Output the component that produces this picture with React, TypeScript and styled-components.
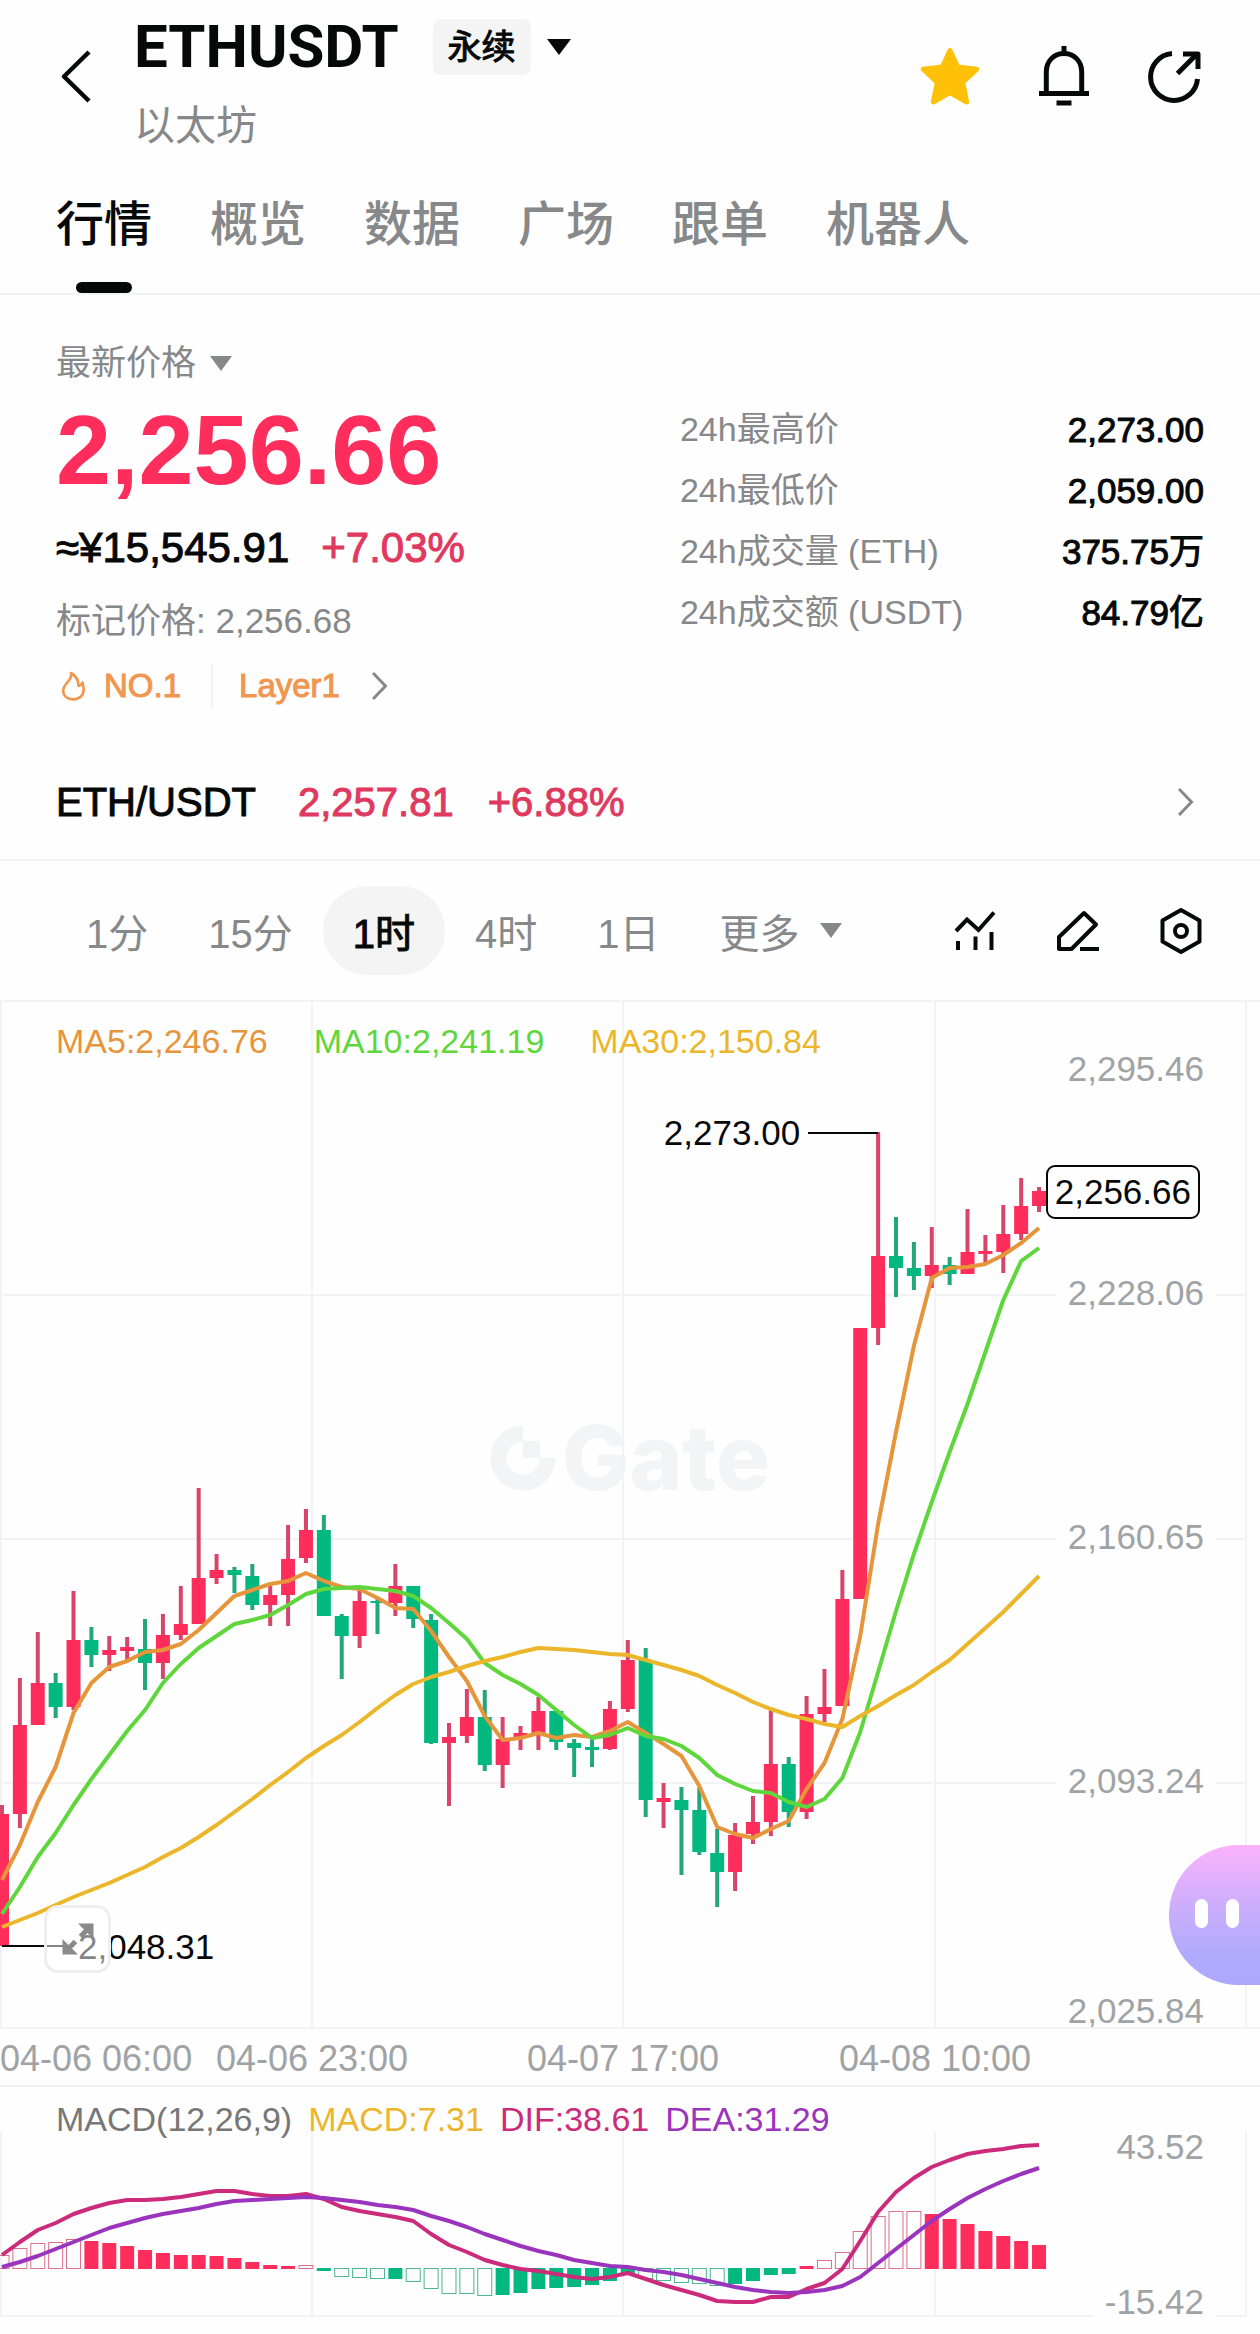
import React from "react";
import styled, { createGlobalStyle, css } from "styled-components";

const color = {
  ink: "#070808",
  muted: "#868889",
  axis: "#a0a3a5",
  line: "#f2f3f4",
  fill: "#f4f4f4",
  up: "#ff2d5b",
  upWick: "#d8456b",
  down: "#02b87f",
  downWick: "#22a67c",
  rise: "#e0395f",
  hot: "#f0964f",
  ma5: "#e6953a",
  ma10: "#5fd63c",
  ma30: "#ebb62a",
  dif: "#cc2a7a",
  dea: "#9b34bd",
};

const GlobalStyle = createGlobalStyle`
  * { box-sizing: border-box; }
  body {
    margin: 0;
    background: #fefefe;
    color: ${color.ink};
    font-family: "Liberation Sans", "Noto Sans CJK SC", sans-serif;
    overflow-x: hidden;
  }
  button { margin: 0; padding: 0; border: 0; background: none; color: inherit; font: inherit; cursor: pointer; }
  a { color: inherit; text-decoration: none; }
  svg { display: block; }
  dl, dd, h1, p { margin: 0; }
`;

const medium = css`
  -webkit-text-stroke: 1px currentColor;
`;

/* ---------- header ---------- */

const Page = styled.main`
  padding-bottom: 16px;
`;

const Header = styled.header`
  display: flex;
  align-items: center;
  padding: 0 58px 0 56px;
`;

const BackButton = styled.button`
  width: 78px;
  flex: none;
`;

const Titles = styled.div`
  flex: 1;
  padding: 19px 0 1px;
`;

const TitleRow = styled.div`
  display: flex;
  align-items: center;
  height: 56px;
`;

const Symbol = styled.h1`
  font: 700 60px/56px Roboto, sans-serif;
`;

const ContractButton = styled.button`
  display: flex;
  align-items: center;
  gap: 16px;
  margin-left: 34px;
  font-size: 34px;
  line-height: 56px;
`;

const Badge = styled.span`
  padding: 0 15px;
  border-radius: 8px;
  background: ${color.fill};
  ${medium}
`;

const Subtitle = styled.p`
  margin-top: 26px;
  color: ${color.muted};
  font-size: 41px;
  line-height: 50px;
`;

const Actions = styled.div`
  display: flex;
  align-items: center;
  gap: 59px;
`;

const Triangle = styled.span<{ $size: number }>`
  border: solid transparent;
  border-width: ${(p) => p.$size + 4}px ${(p) => p.$size}px 0;
  border-top-color: currentColor;
`;

/* ---------- tabs ---------- */

const Tabs = styled.nav`
  display: flex;
  gap: 58px;
  padding: 0 56px;
  border-bottom: 2px solid ${color.line};
`;

const Tab = styled.button<{ $active?: boolean }>`
  display: flex;
  flex-direction: column;
  align-items: center;
  gap: 27px;
  padding-top: 43px;
  color: ${(p) => (p.$active ? color.ink : color.muted)};
  font-size: 48px;
  font-weight: 500;
  line-height: 60px;
  white-space: nowrap;

  &::after {
    content: "";
    width: 56px;
    height: 11px;
    border-radius: 6px;
    background: ${(p) => (p.$active ? color.ink : "transparent")};
  }
`;

/* ---------- quote ---------- */

const Quote = styled.section`
  display: grid;
  grid-template-columns: 25fr 21fr;
  padding: 46px 56px 0;
`;

const PriceSource = styled.button`
  display: flex;
  align-items: center;
  gap: 14px;
  color: ${color.muted};
  font-size: 35px;
  line-height: 44px;
`;

const LastPrice = styled.p`
  margin-top: 15px;
  color: ${color.up};
  font-size: 99px;
  font-weight: 700;
  line-height: 100px;
`;

const FiatRow = styled.p`
  display: flex;
  gap: 32px;
  margin-top: 24px;
  font-size: 42px;
  line-height: 48px;
  ${medium}
`;

const Rise = styled.span`
  color: ${color.rise};
`;

const MarkPrice = styled.p`
  margin-top: 27px;
  color: ${color.muted};
  font-size: 35px;
  line-height: 44px;
`;

const Tags = styled.a`
  display: inline-flex;
  align-items: center;
  margin-top: 21px;
  color: ${color.hot};
  font-size: 33px;
  line-height: 44px;
`;

const Tag = styled.span`
  ${medium}
`;

const HotTag = styled(Tag)`
  display: flex;
  align-items: center;
  gap: 18px;
  padding: 0 30px 0 4px;
  border-right: 2px solid ${color.line};
`;

const SectorTag = styled(Tag)`
  padding: 0 32px 0 26px;
`;

const Stats = styled.dl`
  padding-top: 58px;
  line-height: 61px;
`;

const Stat = styled.div`
  display: flex;
  justify-content: space-between;
`;

const StatLabel = styled.dt`
  color: ${color.muted};
  font-size: 34px;
`;

const StatValue = styled.dd`
  font-size: 35px;
  ${medium}
`;

const SpotLink = styled.a`
  display: flex;
  align-items: center;
  gap: 34px;
  height: 116px;
  margin-top: 37px;
  padding: 0 66px 0 56px;
  border-bottom: 2px solid ${color.line};
  font-size: 40px;
  ${medium}
`;

const SpotPair = styled.span`
  margin-right: 8px;
`;

const Spacer = styled.span`
  flex: 1;
`;

/* ---------- toolbar ---------- */

const Toolbar = styled.div`
  display: flex;
  align-items: center;
  padding: 25px 58px 25px 56px;
  border-bottom: 2px solid ${color.line};
`;

const Interval = styled.button<{ $active?: boolean }>`
  display: flex;
  align-items: center;
  gap: 20px;
  height: 89px;
  padding: 0 30px;
  border-radius: 45px;
  background: ${(p) => (p.$active ? color.fill : "none")};
  color: ${(p) => (p.$active ? color.ink : color.muted)};
  font-size: 40px;
  ${(p) => p.$active && medium}
  white-space: nowrap;
`;

const Tools = styled.div`
  display: flex;
  align-items: center;
  gap: 60px;
  margin-left: auto;
`;

/* ---------- charts ---------- */

const Plot = styled.section<{ $height: number }>`
  position: relative;
  height: ${(p) => p.$height}px;
`;

const PlotSvg = styled.svg`
  position: absolute;
  inset: 0;
  width: 100%;
  height: 100%;
`;

const Legend = styled.div<{ $gap: number; $top: number }>`
  position: relative;
  display: flex;
  gap: ${(p) => p.$gap}px;
  padding: ${(p) => p.$top}px 56px 0;
  font-size: 34px;
  line-height: 40px;
  white-space: nowrap;
`;

const LegendItem = styled.span<{ $color: string }>`
  color: ${(p) => p.$color};
`;

const Label = styled.span`
  position: absolute;
  font-size: 35px;
  line-height: 40px;
  white-space: nowrap;
  transform: translateY(-50%);
`;

const AxisLabel = styled(Label)`
  right: 44px;
  padding: 0 12px;
  background: #fefefe;
  color: ${color.axis};
`;

const HighLabel = styled(Label)`
  right: 36.5%;
`;

const LowLabel = styled(Label)`
  left: 78px;
`;

const PriceTag = styled(Label)`
  right: 60px;
  padding: 3px 7px;
  border: 2px solid ${color.ink};
  border-radius: 9px;
  background: #fefefe;
  line-height: 44px;
`;

const Watermark = styled.div`
  position: absolute;
  top: 456px;
  left: 50%;
  display: flex;
  align-items: center;
  gap: 6px;
  color: #f3f4f5;
  font: 800 90px/90px Inter, sans-serif;
  transform: translate(-50%, -50%);
`;

const ExpandButton = styled.button`
  position: absolute;
  left: 44px;
  bottom: 54px;
  display: grid;
  place-items: center;
  width: 67px;
  height: 68px;
  border: 3px solid #eeeeee;
  border-radius: 14px;
  background: rgba(255, 255, 255, 0.5);
`;

const Assistant = styled.button`
  position: absolute;
  right: 0;
  bottom: 42px;
  display: flex;
  align-items: center;
  gap: 18px;
  width: 91px;
  height: 140px;
  padding: 0 0 4px 26px;
  border-radius: 70px 0 0 70px;
  background: linear-gradient(#fbb2fd, #cbaefc 45%, #b3abfd 75%, #aca6fd);
`;

const Eye = styled.span`
  width: 13px;
  height: 29px;
  border-radius: 7px;
  background: #fff;
`;

const TimeAxis = styled.div`
  position: relative;
  height: 60px;
  border: solid ${color.line};
  border-width: 2px 0;
  color: ${color.axis};
  font-size: 36px;
  line-height: 60px;
`;

const TimeLabel = styled.time<{ $start?: boolean }>`
  position: absolute;
  white-space: nowrap;
  transform: ${(p) => (p.$start ? "none" : "translateX(-50%)")};
`;

/* ---------- data ---------- */

const VIEW = 1260;
const STEP = 17.88;
const ORIGIN = 1003;
const PRICE_HEIGHT = 1025;
const MACD_ORIGIN = 2088;
const MACD_HEIGHT = 230;
const ZERO = 2269;
const GRID_X = [1, 312, 623, 935, 1246];

const xAt = (i: number) => 2 + i * STEP;

type Candle = [high: number, top: number, bottom: number, low: number, up: 0 | 1];

const candles: Candle[] = [
  [1806, 1815, 1947, 1947, 1], [1679, 1726, 1815, 1829, 1], [1633, 1684, 1726, 1726, 1], [1674, 1684, 1708, 1719, 0],
  [1592, 1641, 1708, 1711, 1], [1628, 1641, 1656, 1668, 0], [1637, 1651, 1656, 1672, 1], [1638, 1648, 1652, 1662, 1],
  [1620, 1650, 1664, 1691, 0], [1615, 1636, 1664, 1680, 1], [1587, 1625, 1636, 1641, 1], [1489, 1579, 1625, 1625, 1],
  [1555, 1571, 1579, 1585, 1], [1568, 1571, 1576, 1594, 0], [1565, 1577, 1606, 1611, 0], [1587, 1596, 1606, 1627, 1],
  [1526, 1560, 1596, 1627, 1], [1510, 1531, 1559, 1564, 1], [1516, 1531, 1617, 1617, 0], [1615, 1617, 1637, 1680, 0],
  [1589, 1602, 1637, 1649, 1], [1599, 1602, 1604, 1635, 0], [1565, 1587, 1604, 1617, 1], [1587, 1587, 1620, 1629, 0],
  [1615, 1621, 1744, 1745, 0], [1724, 1738, 1744, 1807, 1], [1690, 1718, 1737, 1744, 1], [1691, 1718, 1766, 1772, 0],
  [1718, 1740, 1766, 1789, 1], [1727, 1734, 1739, 1751, 1], [1698, 1712, 1734, 1751, 1], [1712, 1712, 1743, 1751, 0],
  [1740, 1744, 1749, 1778, 0], [1740, 1748, 1751, 1768, 0], [1702, 1710, 1750, 1751, 1], [1641, 1661, 1710, 1713, 1],
  [1649, 1661, 1801, 1818, 0], [1784, 1799, 1803, 1829, 1], [1788, 1801, 1811, 1876, 0], [1788, 1811, 1853, 1856, 0],
  [1830, 1854, 1873, 1908, 0], [1824, 1836, 1873, 1892, 1], [1797, 1823, 1835, 1845, 1], [1711, 1765, 1823, 1837, 1],
  [1758, 1765, 1813, 1828, 0], [1697, 1715, 1813, 1820, 1], [1670, 1708, 1715, 1723, 1], [1571, 1600, 1707, 1707, 1],
  [1329, 1329, 1600, 1600, 1], [1133, 1257, 1329, 1346, 1], [1218, 1257, 1269, 1298, 0], [1243, 1269, 1277, 1291, 0],
  [1228, 1266, 1277, 1289, 1], [1258, 1266, 1275, 1286, 0], [1210, 1253, 1275, 1275, 1], [1236, 1252, 1255, 1266, 1],
  [1206, 1235, 1253, 1274, 1], [1179, 1207, 1235, 1241, 1], [1188, 1192, 1207, 1213, 1],
];

const ma5 = [
  1881, 1846, 1803, 1768, 1714, 1684, 1668, 1662, 1653, 1651, 1645, 1631, 1614, 1597, 1591, 1585, 1582, 1574, 1582,
  1588, 1590, 1599, 1609, 1610, 1632, 1658, 1682, 1717, 1741, 1739, 1734, 1739, 1736, 1738, 1732, 1723, 1734, 1745,
  1757, 1787, 1828, 1835, 1839, 1830, 1822, 1790, 1764, 1720, 1637, 1525, 1433, 1347, 1279, 1269, 1268, 1265, 1256,
  1244, 1229,
];

const ma10 = [
  1915, 1888, 1858, 1834, 1806, 1780, 1756, 1732, 1711, 1684, 1665, 1649, 1637, 1625, 1621, 1616, 1606, 1595, 1590,
  1589, 1588, 1590, 1592, 1597, 1609, 1624, 1640, 1664, 1676, 1685, 1696, 1711, 1726, 1739, 1736, 1729, 1737, 1740,
  1747, 1759, 1776, 1785, 1792, 1794, 1803, 1808, 1800, 1779, 1733, 1673, 1612, 1555, 1503, 1453, 1405, 1353, 1301,
  1262, 1249,
];

const ma30 = [
  1928, 1921, 1914, 1906, 1898, 1891, 1884, 1876, 1868, 1858, 1849, 1838, 1826, 1813, 1800, 1786, 1773, 1759, 1747,
  1736, 1723, 1709, 1696, 1685, 1678, 1673, 1667, 1662, 1658, 1653, 1649, 1650, 1651, 1653, 1655, 1656, 1661, 1666,
  1671, 1677, 1686, 1694, 1703, 1710, 1716, 1720, 1725, 1728, 1717, 1707, 1696, 1686, 1673, 1661, 1645, 1629, 1613,
  1595, 1577,
];

const dif = [
  2256, 2243, 2231, 2224, 2215, 2209, 2204, 2201, 2201, 2200, 2198, 2195, 2192, 2192, 2195, 2197, 2197, 2195, 2200,
  2208, 2212, 2215, 2218, 2222, 2235, 2246, 2253, 2261, 2266, 2270, 2272, 2275, 2278, 2280, 2278, 2274, 2280, 2286,
  2291, 2296, 2302, 2303, 2303, 2298, 2298, 2290, 2284, 2270, 2242, 2213, 2193, 2179, 2168, 2161, 2155, 2152, 2150,
  2147, 2146,
];

const dea = [
  2268, 2263, 2257, 2250, 2243, 2236, 2229, 2224, 2219, 2215, 2212, 2209, 2205, 2202, 2201, 2200, 2199, 2198, 2199,
  2201, 2203, 2206, 2208, 2211, 2217, 2222, 2228, 2235, 2241, 2247, 2252, 2256, 2261, 2264, 2267, 2268, 2271, 2273,
  2276, 2280, 2284, 2288, 2291, 2293, 2294, 2293, 2291, 2287, 2278, 2264, 2250, 2236, 2222, 2210, 2199, 2190, 2182,
  2175, 2169,
];

/* histogram ends; the bars listed in `growing` are drawn as outlines */
const histogram = [
  2256, 2249, 2244, 2243, 2240, 2242, 2244, 2247, 2251, 2254, 2256, 2256, 2257, 2259, 2263, 2266, 2267, 2266, 2271,
  2277, 2278, 2279, 2279, 2282, 2289, 2294, 2294, 2296, 2295, 2293, 2289, 2288, 2287, 2285, 2281, 2275, 2279, 2281,
  2283, 2284, 2286, 2284, 2281, 2275, 2274, 2267, 2261, 2253, 2232, 2217, 2212, 2212, 2215, 2220, 2225, 2232, 2237,
  2242, 2246,
];
const growing = new Set([0, 1, 2, 3, 4, 17, 19, 20, 21, 23, 24, 25, 26, 27, 36, 37, 38, 39, 40, 46, 47, 48, 49, 50, 51]);

const points = (ys: number[]) => ys.map((y, i) => `${xAt(i)},${y}`).join(" ");

const tabs = ["行情", "概览", "数据", "广场", "跟单", "机器人"];
const intervals = ["1分", "15分", "1时", "4时", "1日"];
const stats = [
  ["24h最高价", "2,273.00"],
  ["24h最低价", "2,059.00"],
  ["24h成交量 (ETH)", "375.75万"],
  ["24h成交额 (USDT)", "84.79亿"],
];
const priceAxis: [string, number][] = [
  ["2,295.46", 1070], ["2,228.06", 1294], ["2,160.65", 1538], ["2,093.24", 1782], ["2,025.84", 2012],
];
const macdAxis: [string, number][] = [["43.52", 2148], ["-15.42", 2303]];
const times: [string, number][] = [
  ["04-06 06:00", 0], ["04-06 23:00", 312], ["04-07 17:00", 623], ["04-08 10:00", 935],
];

/* ---------- icons ---------- */

const Chevron = () => (
  <svg width="16" height="28" viewBox="0 0 16 28" fill="none" stroke={color.muted} strokeWidth="3">
    <path d="M1 1l12.500 13L1 27" />
  </svg>
);

const BackIcon = () => (
  <svg width="40" height="56" viewBox="0 0 40 56" fill="none" stroke={color.ink} strokeWidth="4.500" strokeLinejoin="round">
    <path d="M33 4L8 28.500 33 53" />
  </svg>
);

const StarIcon = () => (
  <svg width="60" height="58" viewBox="0 0 60 58" fill="#ffc107" stroke="#ffc107" strokeWidth="5" strokeLinejoin="round">
    <path d="M30 3.500l7.700 16.500 19 2.200-14 13.300 4 19.500L30 45.500 13.300 55l4-19.500L3.300 22.200l19-2.200z" />
  </svg>
);

const BellIcon = () => (
  <svg width="50" height="60" viewBox="0 0 50 60" fill="none" stroke={color.ink} strokeWidth="5">
    <path d="M25 0v8M7.300 47V26C7.300 15 15 7.500 25 7.500S42.700 15 42.700 26v21M0 47.500h50M17.500 57h15" />
  </svg>
);

const ShareIcon = () => (
  <svg width="54" height="54" viewBox="0 0 54 54" fill="none" stroke={color.ink} strokeWidth="5">
    <path d="M24 4.500A23.500 23.500 0 1 0 49.500 30" />
    <path d="M29.500 24.500L49 5" />
    <path d="M35 5h15v15" strokeLinejoin="round" />
  </svg>
);

const FlameIcon = () => (
  <svg width="26" height="30" viewBox="0 0 26 30" fill="none" stroke={color.hot} strokeWidth="2.600" strokeLinejoin="round">
    <path d="M11 2c1 5-2 7.500-5 11-3 3.500-4.500 9 0 13 4 3.200 11 3.200 15-.5 3.500-3.500 3-9 1.500-14-1 2-2 3.200-4 3.500C18.500 9 15.500 4.500 11 2z" />
  </svg>
);

const IndicatorIcon = () => (
  <svg width="42" height="42" viewBox="0 0 42 42" fill="none" stroke={color.ink} strokeWidth="4">
    <path d="M2 21l11-11.500 11.500 10.500L40 2.500M4 31v9M21.500 26.500V40M37.500 22v18" />
  </svg>
);

const PencilIcon = () => (
  <svg width="44" height="44" viewBox="0 0 44 44" fill="none" stroke={color.ink} strokeWidth="4" strokeLinejoin="round">
    <path d="M28 4L40 15.500 15.500 40H3V28zM24 40h19" />
  </svg>
);

const HexIcon = () => (
  <svg width="42" height="48" viewBox="0 0 42 48" fill="none" stroke={color.ink} strokeWidth="4" strokeLinejoin="round">
    <path d="M21 3l18.500 10.500v21L21 45 2.500 34.500v-21z" />
    <circle cx="21" cy="24" r="6" />
  </svg>
);

const ExpandIcon = () => (
  <svg width="32" height="32" viewBox="0 0 32 32" fill="#8a8a8a" stroke="#8a8a8a">
    <path d="M16 .5h15.500V16zM.5 16v15.500H16z" stroke="none" />
    <path d="M26 6l-7.500 7.500M13.500 18.500L6 26" strokeWidth="5" />
  </svg>
);

const GateMark = () => (
  <svg width="66" height="66" viewBox="0 0 66 66">
    <path d="M33 8.500A24.500 24.500 0 1 0 57.500 33" fill="none" stroke="#f3f4f5" strokeWidth="16" />
    <path d="M33 16h17v17H33z" fill="#f3f4f5" />
  </svg>
);

/* ---------- charts ---------- */

const percent = (x: number) => `${(x / VIEW) * 100}%`;

function PriceChart() {
  return (
    <Plot $height={PRICE_HEIGHT}>
      <Watermark aria-hidden="true">
        <GateMark />
        Gate
      </Watermark>
      <PlotSvg viewBox={`0 ${ORIGIN} ${VIEW} ${PRICE_HEIGHT}`} preserveAspectRatio="none" aria-label="K线图">
        <g stroke={color.line} strokeWidth="2">
          {GRID_X.map((x) => (
            <line key={x} x1={x} x2={x} y1={ORIGIN} y2={ORIGIN + PRICE_HEIGHT} />
          ))}
          {[1296, 1540, 1784].map((y) => (
            <line key={y} x1="0" x2="1246" y1={y} y2={y} />
          ))}
        </g>
        {candles.map(([high, top, bottom, low, up], i) => (
          <g key={i}>
            <rect x={xAt(i) - 2} y={high} width="4" height={low - high} fill={up ? color.upWick : color.downWick} />
            <rect x={xAt(i) - 7} y={top} width="14" height={bottom - top} fill={up ? color.up : color.down} />
          </g>
        ))}
        <g fill="none" strokeWidth="4" strokeLinejoin="round">
          <polyline points={points(ma5)} stroke={color.ma5} />
          <polyline points={points(ma10)} stroke={color.ma10} />
          <polyline points={points(ma30)} stroke={color.ma30} />
        </g>
        <path d="M808 1134H878M2 1947H74" stroke={color.ink} strokeWidth="2" />
      </PlotSvg>
      <Legend $gap={46} $top={19}>
        <LegendItem $color={color.ma5}>MA5:2,246.76</LegendItem>
        <LegendItem $color={color.ma10}>MA10:2,241.19</LegendItem>
        <LegendItem $color={color.ma30}>MA30:2,150.84</LegendItem>
      </Legend>
      {priceAxis.map(([text, y]) => (
        <AxisLabel key={text} style={{ top: y - ORIGIN }}>{text}</AxisLabel>
      ))}
      <HighLabel style={{ top: 1134 - ORIGIN }}>2,273.00</HighLabel>
      <LowLabel style={{ top: 1948 - ORIGIN }}>2,048.31</LowLabel>
      <PriceTag style={{ top: 1193 - ORIGIN }}>2,256.66</PriceTag>
      <ExpandButton aria-label="全屏"><ExpandIcon /></ExpandButton>
      <Assistant aria-label="助手"><Eye /><Eye /></Assistant>
    </Plot>
  );
}

function MacdChart() {
  return (
    <Plot $height={MACD_HEIGHT}>
      <PlotSvg viewBox={`0 ${MACD_ORIGIN} ${VIEW} ${MACD_HEIGHT}`} preserveAspectRatio="none" aria-label="MACD">
        <g stroke={color.line} strokeWidth="2">
          {GRID_X.map((x) => (
            <line key={x} x1={x} x2={x} y1="2132" y2="2318" />
          ))}
          <line x1="0" x2="1246" y1="2317" y2="2317" />
        </g>
        {histogram.map((y, i) => {
          const up = y < ZERO;
          const top = Math.min(y, ZERO);
          const height = Math.abs(y - ZERO);
          return growing.has(i) ? (
            <rect key={i} x={xAt(i) - 7} y={top + 0.5} width="14" height={height} fill="none"
              stroke={up ? "#dc6f8b" : "#4db592"} />
          ) : (
            <rect key={i} x={xAt(i) - 7} y={top} width="14" height={height + 1} fill={up ? color.up : color.down} />
          );
        })}
        <g fill="none" strokeWidth="4" strokeLinejoin="round">
          <polyline points={points(dif)} stroke={color.dif} />
          <polyline points={points(dea)} stroke={color.dea} />
        </g>
      </PlotSvg>
      <Legend $gap={16} $top={12}>
        <LegendItem $color="#777777">MACD(12,26,9)</LegendItem>
        <LegendItem $color={color.ma30}>MACD:7.31</LegendItem>
        <LegendItem $color={color.dif}>DIF:38.61</LegendItem>
        <LegendItem $color={color.dea}>DEA:31.29</LegendItem>
      </Legend>
      {macdAxis.map(([text, y]) => (
        <AxisLabel key={text} style={{ top: y - MACD_ORIGIN }}>{text}</AxisLabel>
      ))}
    </Plot>
  );
}

export default function App() {
  return (
    <>
      <GlobalStyle />
      <Page>
        <Header>
          <BackButton aria-label="返回"><BackIcon /></BackButton>
          <Titles>
            <TitleRow>
              <Symbol>ETHUSDT</Symbol>
              <ContractButton>
                <Badge>永续</Badge>
                <Triangle $size={12} />
              </ContractButton>
            </TitleRow>
            <Subtitle>以太坊</Subtitle>
          </Titles>
          <Actions>
            <button aria-label="收藏"><StarIcon /></button>
            <button aria-label="提醒"><BellIcon /></button>
            <button aria-label="分享"><ShareIcon /></button>
          </Actions>
        </Header>

        <Tabs>
          {tabs.map((tab, i) => (
            <Tab key={tab} $active={i === 0}>{tab}</Tab>
          ))}
        </Tabs>

        <Quote>
          <div>
            <PriceSource>
              最新价格
              <Triangle $size={11} />
            </PriceSource>
            <LastPrice>2,256.66</LastPrice>
            <FiatRow>
              <span>≈¥15,545.91</span>
              <Rise>+7.03%</Rise>
            </FiatRow>
            <MarkPrice>标记价格: 2,256.68</MarkPrice>
            <Tags href="#rank">
              <HotTag><FlameIcon />NO.1</HotTag>
              <SectorTag>Layer1</SectorTag>
              <Chevron />
            </Tags>
          </div>
          <Stats>
            {stats.map(([label, value]) => (
              <Stat key={label}>
                <StatLabel>{label}</StatLabel>
                <StatValue>{value}</StatValue>
              </Stat>
            ))}
          </Stats>
        </Quote>

        <SpotLink href="#spot">
          <SpotPair>ETH/USDT</SpotPair>
          <Rise>2,257.81</Rise>
          <Rise>+6.88%</Rise>
          <Spacer />
          <Chevron />
        </SpotLink>

        <Toolbar>
          {intervals.map((label) => (
            <Interval key={label} $active={label === "1时"}>{label}</Interval>
          ))}
          <Interval>
            更多
            <Triangle $size={11} />
          </Interval>
          <Tools>
            <button aria-label="指标"><IndicatorIcon /></button>
            <button aria-label="画图"><PencilIcon /></button>
            <button aria-label="设置"><HexIcon /></button>
          </Tools>
        </Toolbar>

        <PriceChart />
        <TimeAxis>
          {times.map(([text, x]) => (
            <TimeLabel key={text} $start={x === 0} style={{ left: percent(x) }}>{text}</TimeLabel>
          ))}
        </TimeAxis>
        <MacdChart />
      </Page>
    </>
  );
}
